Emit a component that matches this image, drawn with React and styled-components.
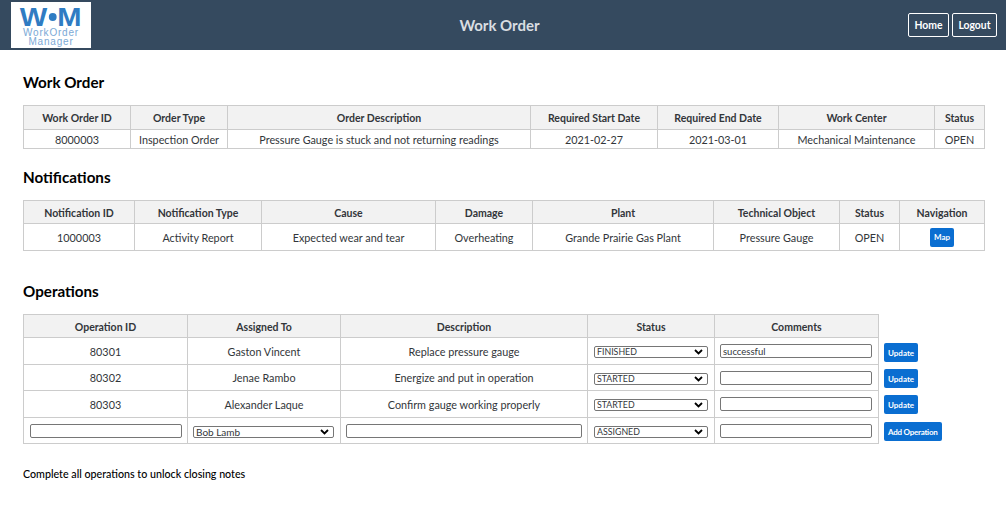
import React from 'react';
import styled, { createGlobalStyle } from 'styled-components';

const GlobalStyle = createGlobalStyle`
  body {
    margin: 0;
    background: #fff;
    font-family: Lato, "Liberation Sans", sans-serif;
    color: #32363a;
  }
`;

function Grid({ widths, heads, headHeight = 20, headPad = 2, children }) {
  return (
    <Table>
      <colgroup>
        {widths.map((w, i) => <Col key={i} $w={w} />)}
      </colgroup>
      <thead>
        <tr>{heads.map((h) => <Th key={h} $h={headHeight} $pad={headPad}>{h}</Th>)}</tr>
      </thead>
      <tbody>{children}</tbody>
    </Table>
  );
}

function StatusSelect({ value }) {
  return (
    <Select $w={114} $size={8.8} defaultValue={value}>
      <option>ASSIGNED</option>
      <option>STARTED</option>
      <option>FINISHED</option>
    </Select>
  );
}

const operations = [
  { id: '80301', who: 'Gaston Vincent', desc: 'Replace pressure gauge', status: 'FINISHED', comment: 'successful', h: 27 },
  { id: '80302', who: 'Jenae Rambo', desc: 'Energize and put in operation', status: 'STARTED', comment: '', h: 26 },
  { id: '80303', who: 'Alexander Laque', desc: 'Confirm gauge working properly', status: 'STARTED', comment: '', h: 27 },
];

function App() {
  return (
    <>
      <GlobalStyle />
      <Header>
        <Logo>
          <LogoMark>W<LogoDot />M</LogoMark>
          <LogoText>WorkOrder</LogoText>
          <LogoText>Manager</LogoText>
        </Logo>
        <Title>Work Order</Title>
        <Nav>
          <NavButton $w={41}>Home</NavButton>
          <NavButton $w={45}>Logout</NavButton>
        </Nav>
      </Header>
      <Main>
        <Heading $bottom={13}>Work Order</Heading>
        <Grid
          headHeight={23}
          headPad={0}
          widths={[107, 97, 303, 127, 121, 156, 50]}
          heads={['Work Order ID', 'Order Type', 'Order Description', 'Required Start Date', 'Required End Date', 'Work Center', 'Status']}
        >
          <Row $h={19}>
            <Td>8000003</Td>
            <Td>Inspection Order</Td>
            <Td>Pressure Gauge is stuck and not returning readings</Td>
            <Td>2021-02-27</Td>
            <Td>2021-03-01</Td>
            <Td>Mechanical Maintenance</Td>
            <Td>OPEN</Td>
          </Row>
        </Grid>

        <Heading $top={19} $bottom={13}>Notifications</Heading>
        <Grid
          widths={[111, 127, 174, 97, 181, 126, 60, 85]}
          heads={['Notification ID', 'Notification Type', 'Cause', 'Damage', 'Plant', 'Technical Object', 'Status', 'Navigation']}
        >
          <Row $h={27}>
            <Td>1000003</Td>
            <Td>Activity Report</Td>
            <Td>Expected wear and tear</Td>
            <Td>Overheating</Td>
            <Td>Grande Prairie Gas Plant</Td>
            <Td>Pressure Gauge</Td>
            <Td>OPEN</Td>
            <Td><SmallButton $pad={3.5}>Map</SmallButton></Td>
          </Row>
        </Grid>

        <Heading $top={31} $bottom={13}>Operations</Heading>
        <OperationsLayout>
          <Grid
            widths={[164, 153, 247, 127, 164]}
            heads={['Operation ID', 'Assigned To', 'Description', 'Status', 'Comments']}
          >
            {operations.map((op) => (
              <Row key={op.id} $h={op.h}>
                <Td>{op.id}</Td>
                <Td>{op.who}</Td>
                <Td>{op.desc}</Td>
                <Td><StatusSelect value={op.status} /></Td>
                <Td><Input $w={152} $left={5} defaultValue={op.comment} /></Td>
              </Row>
            ))}
            <Row $h={26}>
              <Td><Input $w={152} /></Td>
              <Td>
                <Select $w={141} $left={5} $size={10} defaultValue="Bob Lamb">
                  <option>Bob Lamb</option>
                </Select>
              </Td>
              <Td><Input $w={236} /></Td>
              <Td><StatusSelect value="ASSIGNED" /></Td>
              <Td><Input $w={152} $left={5} /></Td>
            </Row>
          </Grid>
          <Actions>
            <SmallButton>Update</SmallButton>
            <SmallButton>Update</SmallButton>
            <SmallButton>Update</SmallButton>
            <AddButton>Add Operation</AddButton>
          </Actions>
        </OperationsLayout>
        <Note>Complete all operations to unlock closing notes</Note>
      </Main>
    </>
  );
}

const chevron = `url("data:image/svg+xml,%3Csvg xmlns='http://www.w3.org/2000/svg' width='9' height='6' viewBox='0 0 9 6'%3E%3Cpath d='M1 1l3.5 3.5L8 1' fill='none' stroke='%23000' stroke-width='1.8'/%3E%3C/svg%3E")`;

const Header = styled.header`
  height: 50px;
  background: #354a5f;
  display: grid;
  grid-template-columns: 1fr auto 1fr;
  align-items: center;
  padding: 0 9px 0 2px;
`;
const Logo = styled.div`
  width: 80px;
  height: 46px;
  margin-left: 9px;
  background: #fff;
  display: flex;
  flex-direction: column;
  align-items: center;
  overflow: hidden;
`;
const LogoMark = styled.div`
  display: flex;
  align-items: center;
  height: 20px;
  margin-top: 5px;
  margin-bottom: 1px;
  font-family: "Liberation Sans", sans-serif;
  font-weight: 700;
  font-size: 26px;
  line-height: 20px;
  color: #2f7cc3;
  transform: scaleX(1.12);
`;
const LogoDot = styled.span`
  width: 7px;
  height: 8px;
  margin: 0 1px;
  border-radius: 50%;
  background: #2f7cc3;
`;
const LogoText = styled.div`
  font-family: "Liberation Sans", sans-serif;
  font-size: 10px;
  line-height: 9px;
  letter-spacing: 0.8px;
  white-space: nowrap;
  color: #7ba9d6;
`;
const Title = styled.div`
  font-size: 15px;
  font-weight: 700;
  color: #d9dde1;
`;
const Nav = styled.nav`
  display: flex;
  justify-content: flex-end;
  gap: 3px;
`;
const NavButton = styled.button`
  width: ${(p) => p.$w}px;
  height: 24px;
  padding: 0;
  background: transparent;
  border: 1px solid #fff;
  border-radius: 2px;
  color: #fff;
  font: 700 10.4px Lato, sans-serif;
`;
const Main = styled.main`
  padding: 0 21px 0 23px;
`;
const Heading = styled.h2`
  margin: ${(p) => p.$top ?? 23}px 0 ${(p) => p.$bottom ?? 14}px;
  height: 19px;
  font-size: 15.2px;
  line-height: 18px;
  font-weight: 700;
  color: #000;
`;
const Table = styled.table`
  border-collapse: collapse;
  table-layout: fixed;
  width: min-content;
  font-size: 10.8px;
`;
const Col = styled.col`
  width: ${(p) => p.$w}px;
`;
const Th = styled.th`
  height: ${(p) => p.$h}px;
  padding: ${(p) => p.$pad}px 0 0;
  background: #f2f2f2;
  border: 1px solid #ccc;
  font-size: 10.5px;
  font-weight: 700;
  color: #32363a;
`;
const Row = styled.tr`
  height: ${(p) => p.$h}px;
`;
const Td = styled.td`
  padding: 0;
  border: 1px solid #ccc;
  text-align: center;
`;
const Select = styled.select`
  display: block;
  box-sizing: border-box;
  appearance: none;
  width: ${(p) => p.$w}px;
  height: 12px;
  margin: ${(p) => (p.$left != null ? `2px 0 0 ${p.$left}px` : '2px auto 0')};
  padding: 0 0 0 2px;
  background: #fff ${chevron} no-repeat right 4px center;
  border: 1px solid #767676;
  border-radius: 2px;
  color: #32363a;
  font: ${(p) => p.$size}px/10px Lato, sans-serif;
`;
const Input = styled.input`
  display: block;
  box-sizing: border-box;
  width: ${(p) => p.$w}px;
  height: 14px;
  margin: ${(p) => (p.$left != null ? `0 0 0 ${p.$left}px` : '0 auto')};
  padding: 0 2px;
  border: 1px solid #767676;
  border-radius: 2px;
  color: #32363a;
  font: 9.5px Lato, sans-serif;
`;
const SmallButton = styled.button`
  height: 19px;
  padding: 0 ${(p) => p.$pad ?? 4}px;
  background: #0a6ed1;
  border: 0;
  border-radius: 2px;
  color: #fff;
  font: 700 8px Lato, sans-serif;
  vertical-align: middle;
`;
const AddButton = styled(SmallButton)`
  margin-top: 1px;
  letter-spacing: -0.25px;
`;
const OperationsLayout = styled.div`
  display: flex;
  gap: 5px;
`;
const Actions = styled.div`
  display: flex;
  flex-direction: column;
  align-items: flex-start;
  gap: 7px;
  padding-top: 29px;
`;
const Note = styled.p`
  margin: 23px 0 0;
  font-size: 10.7px;
  line-height: 14px;
  font-weight: 500;
  color: #000;
`;

export default App;
